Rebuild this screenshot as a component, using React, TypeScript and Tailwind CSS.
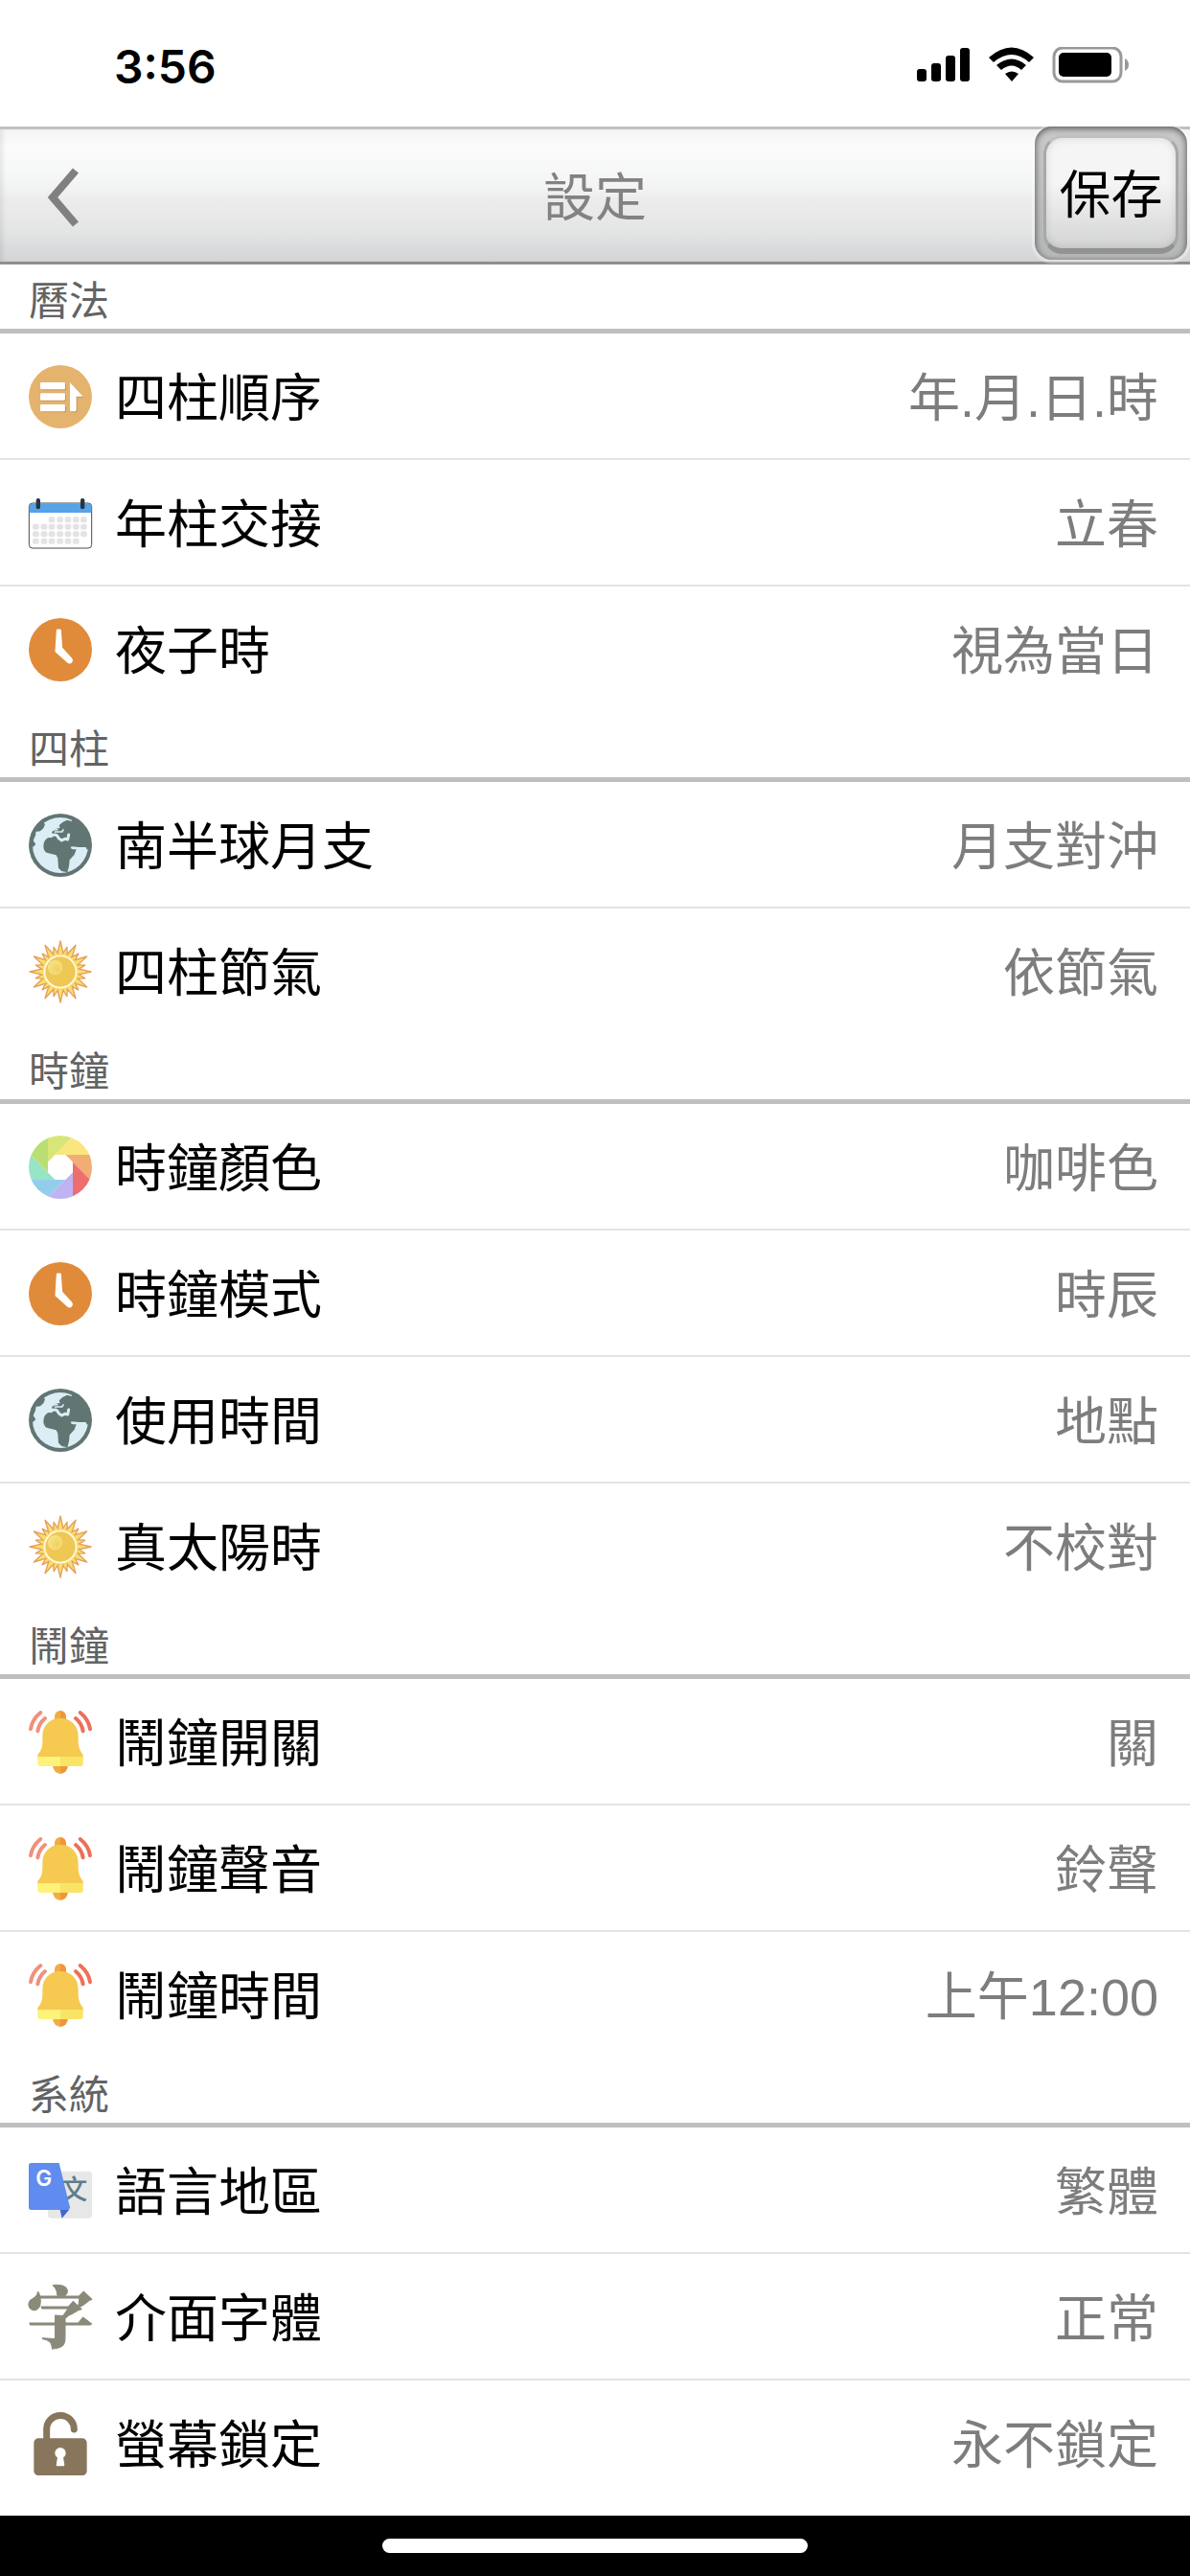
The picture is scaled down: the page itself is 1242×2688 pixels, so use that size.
import type { ReactNode } from "react";

function Icon({ children }: { children: ReactNode }) {
  return (
    <svg viewBox="0 0 198 198" className="size-[66px] shrink-0 overflow-visible" aria-hidden="true">
      {children}
    </svg>
  );
}

function OrderIcon() {
  const arrow = "M129 54 L170 98 H149 V140 Q149 145 144 145 H134 Q129 145 129 140 Z";
  return (
    <Icon>
      <circle cx="99" cy="99" r="99" fill="#e4b36d" />
      <g fill="#b98d4f" opacity="0.7" transform="translate(3 3)">
        <rect x="36" y="54" width="78" height="22" rx="4" />
        <rect x="36" y="88" width="78" height="22" rx="4" />
        <rect x="36" y="123" width="78" height="22" rx="4" />
        <path d={arrow} />
      </g>
      <g fill="#fff">
        <rect x="36" y="54" width="78" height="22" rx="4" />
        <rect x="36" y="88" width="78" height="22" rx="4" />
        <rect x="36" y="123" width="78" height="22" rx="4" />
        <path d={arrow} />
      </g>
    </Icon>
  );
}

function CalendarIcon() {
  const columns = [22, 48, 72, 98, 123, 148, 172];
  const rows = [
    { y: 88, from: 2, to: 7 },
    { y: 110, from: 0, to: 7 },
    { y: 133, from: 0, to: 7 },
    { y: 155, from: 0, to: 6 },
  ];
  return (
    <Icon>
      <rect x="1" y="36" width="196" height="141" rx="11" fill="#fff" stroke="#4a4a4a" strokeWidth="3" />
      <path d="M2 66 V48 Q2 37 13 37 H185 Q196 37 196 48 V66 Z" fill="#55a3e8" />
      {rows.map((row) =>
        columns
          .slice(row.from, row.to)
          .map((x) => (
            <rect key={`${x}-${row.y}`} x={x - 10} y={row.y - 9} width="20" height="18" rx="6" fill="#e3e3e3" />
          )),
      )}
      <rect x="23" y="21" width="13" height="34" rx="6" fill="#263445" />
      <rect x="162" y="21" width="13" height="34" rx="6" fill="#263445" />
    </Icon>
  );
}

function ClockIcon() {
  return (
    <Icon>
      <circle cx="99" cy="99" r="99" fill="#e08b3a" />
      <path
        d="M90 38 H98 L102 94 L132 127 Q137 133 131 138 Q127 141 122 136 L86 104 Z"
        fill="#fff"
        stroke="#fff"
        strokeWidth="7"
        strokeLinejoin="round"
      />
    </Icon>
  );
}

function GlobeIcon() {
  return (
    <Icon>
      <circle cx="99" cy="99" r="99" fill="#617673" />
      <circle cx="99" cy="99" r="87" fill="#dcedf5" />
      <path
        d="M8 62 Q22 28 52 12 L54 22 L45 26 L51 34 L46 46 L36 55 L27 56 L20 53 L22 66 L14 84 L22 96 L14 104 L6 100 Z"
        fill="#617673"
      />
      <path
        d="M134 18 L160 24 L192 66 L190 106 L182 113 L179 105 L158 105 L134 103 L131 108 L138 112 L149 112 L143 128 L128 145 L126 165 L121 184 L103 180 L93 170 L91 140 L86 130 L68 125 Q46 124 46 103 Q46 84 60 76 L70 74 L76 66 L72 58 L84 47 L98 45 L95 37 L106 27 L120 20 L135 24 Z"
        fill="#617673"
      />
      <path
        d="M69 71 Q80 63 88 68 Q93 79 103 84 L113 79 L122 81 L125 66"
        fill="none"
        stroke="#dcedf5"
        strokeWidth="9"
        strokeLinecap="round"
        strokeLinejoin="round"
      />
      <path
        d="M74 50 L89 50 M82 57 L104 57 L108 51"
        fill="none"
        stroke="#dcedf5"
        strokeWidth="5"
        strokeLinecap="round"
        strokeLinejoin="round"
      />
    </Icon>
  );
}

function SunIcon() {
  const rays = Array.from({ length: 24 }, (_, i) => i);
  return (
    <Icon>
      <defs>
        <radialGradient id="sun-glow" cx="0.6" cy="0.6" r="0.6">
          <stop offset="0" stopColor="#f2d062" />
          <stop offset="1" stopColor="#f5e384" />
        </radialGradient>
      </defs>
      {rays.map((i) => (
        <path
          key={i}
          d={i % 2 === 0 ? "M88 50 L99 3 L110 50 Z" : "M89 50 L99 19 L109 50 Z"}
          fill="#f8dd70"
          stroke="#e5a05a"
          strokeWidth="4"
          strokeLinejoin="round"
          transform={`rotate(${i * 15} 99 99)`}
        />
      ))}
      <circle cx="99" cy="99" r="56" fill="#f8dd70" />
      <circle cx="99" cy="99" r="52" fill="#fffbe6" />
      <circle cx="99" cy="99" r="47" fill="#efc755" />
      <circle cx="83" cy="86" r="23" fill="url(#sun-glow)" />
    </Icon>
  );
}

function ColorWheelIcon() {
  return (
    <Icon>
      <defs>
        <clipPath id="wheel-disc">
          <circle cx="99" cy="99" r="99" />
        </clipPath>
      </defs>
      <g clipPath="url(#wheel-disc)">
        <path d="M60 0 V83 L141 0 Z" fill="#d8e577" />
        <path d="M141 0 L82 60 H198 V0 Z" fill="#fbe57e" />
        <path d="M115 60 H198 V143 Z" fill="#f1ad74" />
        <path d="M138 83 V198 H198 V143 Z" fill="#ed6e6e" />
        <path d="M138 113 V198 H53 Z" fill="#bfb3f3" />
        <path d="M113 138 H0 V198 H53 Z" fill="#92ceec" />
        <path d="M83 138 H0 V55 Z" fill="#98e4c6" />
        <path d="M60 115 L0 55 V0 H60 Z" fill="#b9df74" />
      </g>
      <path d="M83 60 H115 L138 83 V115 L115 138 H83 L60 115 V83 Z" fill="#fff" />
    </Icon>
  );
}

function BellIcon() {
  return (
    <Icon>
      <path d="M99 0 A18 18 0 0 0 81 18 V34 H99 Z" fill="#f3ab45" />
      <path d="M99 0 A18 18 0 0 1 117 18 V34 H99 Z" fill="#ef9738" />
      <path d="M75 170 A24 28 0 0 0 99 198 V170 Z" fill="#f3ab45" />
      <path d="M123 170 A24 28 0 0 1 99 198 V170 Z" fill="#ef9738" />
      <path
        d="M99 24 C132 24 155 47 155 80 V98 Q156 122 170 138 V150 H28 V138 Q43 122 43 98 V80 C43 47 66 24 99 24 Z"
        fill="#f6c950"
      />
      <path d="M30 144 H99 V174 H36 Q28 174 28 166 V148 Z" fill="#fdf27a" />
      <path d="M168 144 H99 V174 H162 Q170 174 170 166 V148 Z" fill="#fae465" />
      <g fill="none" strokeWidth="12" strokeLinecap="round">
        <path d="M6 58 Q10 28 37 6 M28 64 Q32 40 51 24" stroke="#ef917b" />
        <path d="M192 58 Q188 28 161 6 M170 64 Q166 40 147 24" stroke="#ed7059" />
      </g>
    </Icon>
  );
}

function TranslateIcon() {
  return (
    <Icon>
      <rect x="60" y="38" width="138" height="147" rx="10" fill="#e6e8e7" />
      <text
        x="142"
        y="125"
        textAnchor="middle"
        fontSize="84"
        fontWeight="500"
        fontFamily="'Noto Sans CJK TC', sans-serif"
        fill="#5f7c8a"
      >
        文
      </text>
      <path d="M8 12 H95 L129 151 L126 159 H8 Q0 159 0 151 V20 Q0 12 8 12 Z" fill="#608cef" />
      <path d="M98 159 H126 L104 185 Z" fill="#4069d0" />
      <text
        x="47"
        y="85"
        textAnchor="middle"
        fontSize="68"
        fontWeight="600"
        fontFamily="Inter, sans-serif"
        fill="#fff"
      >
        G
      </text>
    </Icon>
  );
}

function GlyphIcon() {
  return (
    <Icon>
      <text
        x="99"
        y="176"
        textAnchor="middle"
        fontSize="208"
        fontWeight="900"
        fontFamily="'Noto Serif CJK TC', 'Noto Sans CJK TC', serif"
        fill="#8b8979"
        stroke="#8b8979"
        strokeWidth="3"
      >
        字
      </text>
    </Icon>
  );
}

function LockIcon() {
  return (
    <Icon>
      <path
        d="M56 96 V53 A43 43 0 0 1 142 54"
        fill="none"
        stroke="#87765c"
        strokeWidth="21"
        strokeLinecap="round"
      />
      <rect x="16" y="82" width="166" height="116" rx="14" fill="#87765c" />
      <circle cx="99" cy="128" r="17" fill="#fff" />
      <path d="M91 136 H107 L112 166 Q112 169 109 169 H89 Q86 169 86 166 Z" fill="#fff" />
    </Icon>
  );
}

type Row = { icon: () => ReactNode; label: string; value: string };

const sections: { title: string; rows: Row[] }[] = [
  {
    title: "曆法",
    rows: [
      { icon: OrderIcon, label: "四柱順序", value: "年.月.日.時" },
      { icon: CalendarIcon, label: "年柱交接", value: "立春" },
      { icon: ClockIcon, label: "夜子時", value: "視為當日" },
    ],
  },
  {
    title: "四柱",
    rows: [
      { icon: GlobeIcon, label: "南半球月支", value: "月支對沖" },
      { icon: SunIcon, label: "四柱節氣", value: "依節氣" },
    ],
  },
  {
    title: "時鐘",
    rows: [
      { icon: ColorWheelIcon, label: "時鐘顏色", value: "咖啡色" },
      { icon: ClockIcon, label: "時鐘模式", value: "時辰" },
      { icon: GlobeIcon, label: "使用時間", value: "地點" },
      { icon: SunIcon, label: "真太陽時", value: "不校對" },
    ],
  },
  {
    title: "鬧鐘",
    rows: [
      { icon: BellIcon, label: "鬧鐘開關", value: "關" },
      { icon: BellIcon, label: "鬧鐘聲音", value: "鈴聲" },
      { icon: BellIcon, label: "鬧鐘時間", value: "上午12:00" },
    ],
  },
  {
    title: "系統",
    rows: [
      { icon: TranslateIcon, label: "語言地區", value: "繁體" },
      { icon: GlyphIcon, label: "介面字體", value: "正常" },
      { icon: LockIcon, label: "螢幕鎖定", value: "永不鎖定" },
    ],
  },
];

function StatusBar() {
  return (
    <div className="flex h-[132px] items-center justify-between pl-[119px] pr-16 pt-1">
      <span className="pt-1 font-['Inter'] text-[48px] font-semibold leading-none">3:56</span>
      <svg viewBox="0 0 221 38" className="h-[38px] w-[221px]" aria-hidden="true">
        <rect x="0" y="23" width="10" height="13" rx="3" />
        <rect x="15" y="17" width="10" height="19" rx="3" />
        <rect x="30" y="9" width="10" height="27" rx="3" />
        <rect x="45" y="1" width="10" height="35" rx="3" />
        <path d="M75 11 Q99 -10 122 11 L117 16 Q99 0 80 16 Z" />
        <path d="M83 19 Q99 6 114 19 L109 24 Q99 15 88 24 Z" />
        <path d="M92 28 Q99 23 106 28 L99 36 Z" />
        <rect x="143" y="1" width="70" height="35" rx="9" fill="none" stroke="#999" strokeWidth="3" />
        <rect x="148" y="6" width="55" height="25" rx="5" />
        <path d="M217 12 Q221 14 221 18.500 Q221 23 217 25 Z" fill="#999" />
      </svg>
    </div>
  );
}

function Header() {
  return (
    <header className="flex h-36 items-center justify-between border-y-[3px] border-t-[#c0c0c0] border-b-[#8f8f8f] bg-[linear-gradient(to_bottom,#f4f4f4_0%,#fbfbfb_14%,#f4f6f5_40%,#ececec_53%,#e3e5e4_78%,#d7d8da_94%,#d3d4d6_100%)] shadow-[inset_5px_0_5px_-2px_rgba(0,0,0,0.08)]">
      <button type="button" aria-label="返回" className="flex h-full w-[162px] items-center pl-12 pt-1">
        <svg viewBox="0 0 36 64" className="h-16 w-9" aria-hidden="true">
          <path d="M31 4 L7 32 L31 60" fill="none" stroke="#808080" strokeWidth="8" />
        </svg>
      </button>
      <h1 className="flex-1 pt-1.5 text-center text-[54px] leading-[64px] text-[#828282]">設定</h1>
      <div className="-mt-[3px] mr-[3px] w-[159px] self-start rounded-[18px] bg-linear-to-b from-[#c9c9c9] to-[#b4b6b7] px-[9px] pb-[6px] pt-[9px] shadow-[inset_0_3px_6px_rgba(0,0,0,0.4),inset_3px_0_5px_rgba(0,0,0,0.12),inset_-3px_0_5px_rgba(0,0,0,0.12),0_1px_0_3px_rgba(255,255,255,0.3)]">
        <button
          type="button"
          className="flex h-[124px] w-full items-center justify-center whitespace-nowrap rounded-[20px] border-[3px] border-b-[6px] border-t-[#c0c0c0] border-x-[#a8a8a8] border-b-[#929292] bg-linear-to-b from-[#f5f5f5] from-40% to-[#d2d4d3] pt-1 text-[54px] leading-[64px] shadow-[inset_0_0_8px_rgba(0,0,0,0.12)]"
        >
          保存
        </button>
      </div>
    </header>
  );
}

function SettingRow({ icon: RowIcon, label, value }: Row) {
  return (
    <li className="border-b-2 border-[#e3e3e3] last:border-transparent">
      <button
        type="button"
        className="flex h-[130px] w-full items-center gap-6 pl-[30px] pr-[33px] pt-[2px] text-left text-[54px] leading-[64px]"
      >
        <RowIcon />
        <span className="flex-1 pt-1">{label}</span>
        <span className="pt-1 text-[#7d7d7d]">{value}</span>
      </button>
    </li>
  );
}

export default function App() {
  return (
    <div className="flex min-h-screen flex-col bg-white font-['Liberation_Sans','Noto_Sans_CJK_TC',sans-serif] text-black">
      <StatusBar />
      <Header />
      <main className="flex-1">
        {sections.map((section) => (
          <section key={section.title}>
            <h2 className="flex h-[72px] items-center border-b-[5px] border-[#bfbfbf] pl-[30px] pt-2.5 text-[42px] leading-[60px] text-[#636363]">
              {section.title}
            </h2>
            <ul>
              {section.rows.map((row) => (
                <SettingRow key={row.label} {...row} />
              ))}
            </ul>
          </section>
        ))}
      </main>
      <footer className="flex h-[63px] items-center justify-center bg-black">
        <div className="h-[15px] w-[444px] rounded-full bg-white" />
      </footer>
    </div>
  );
}
